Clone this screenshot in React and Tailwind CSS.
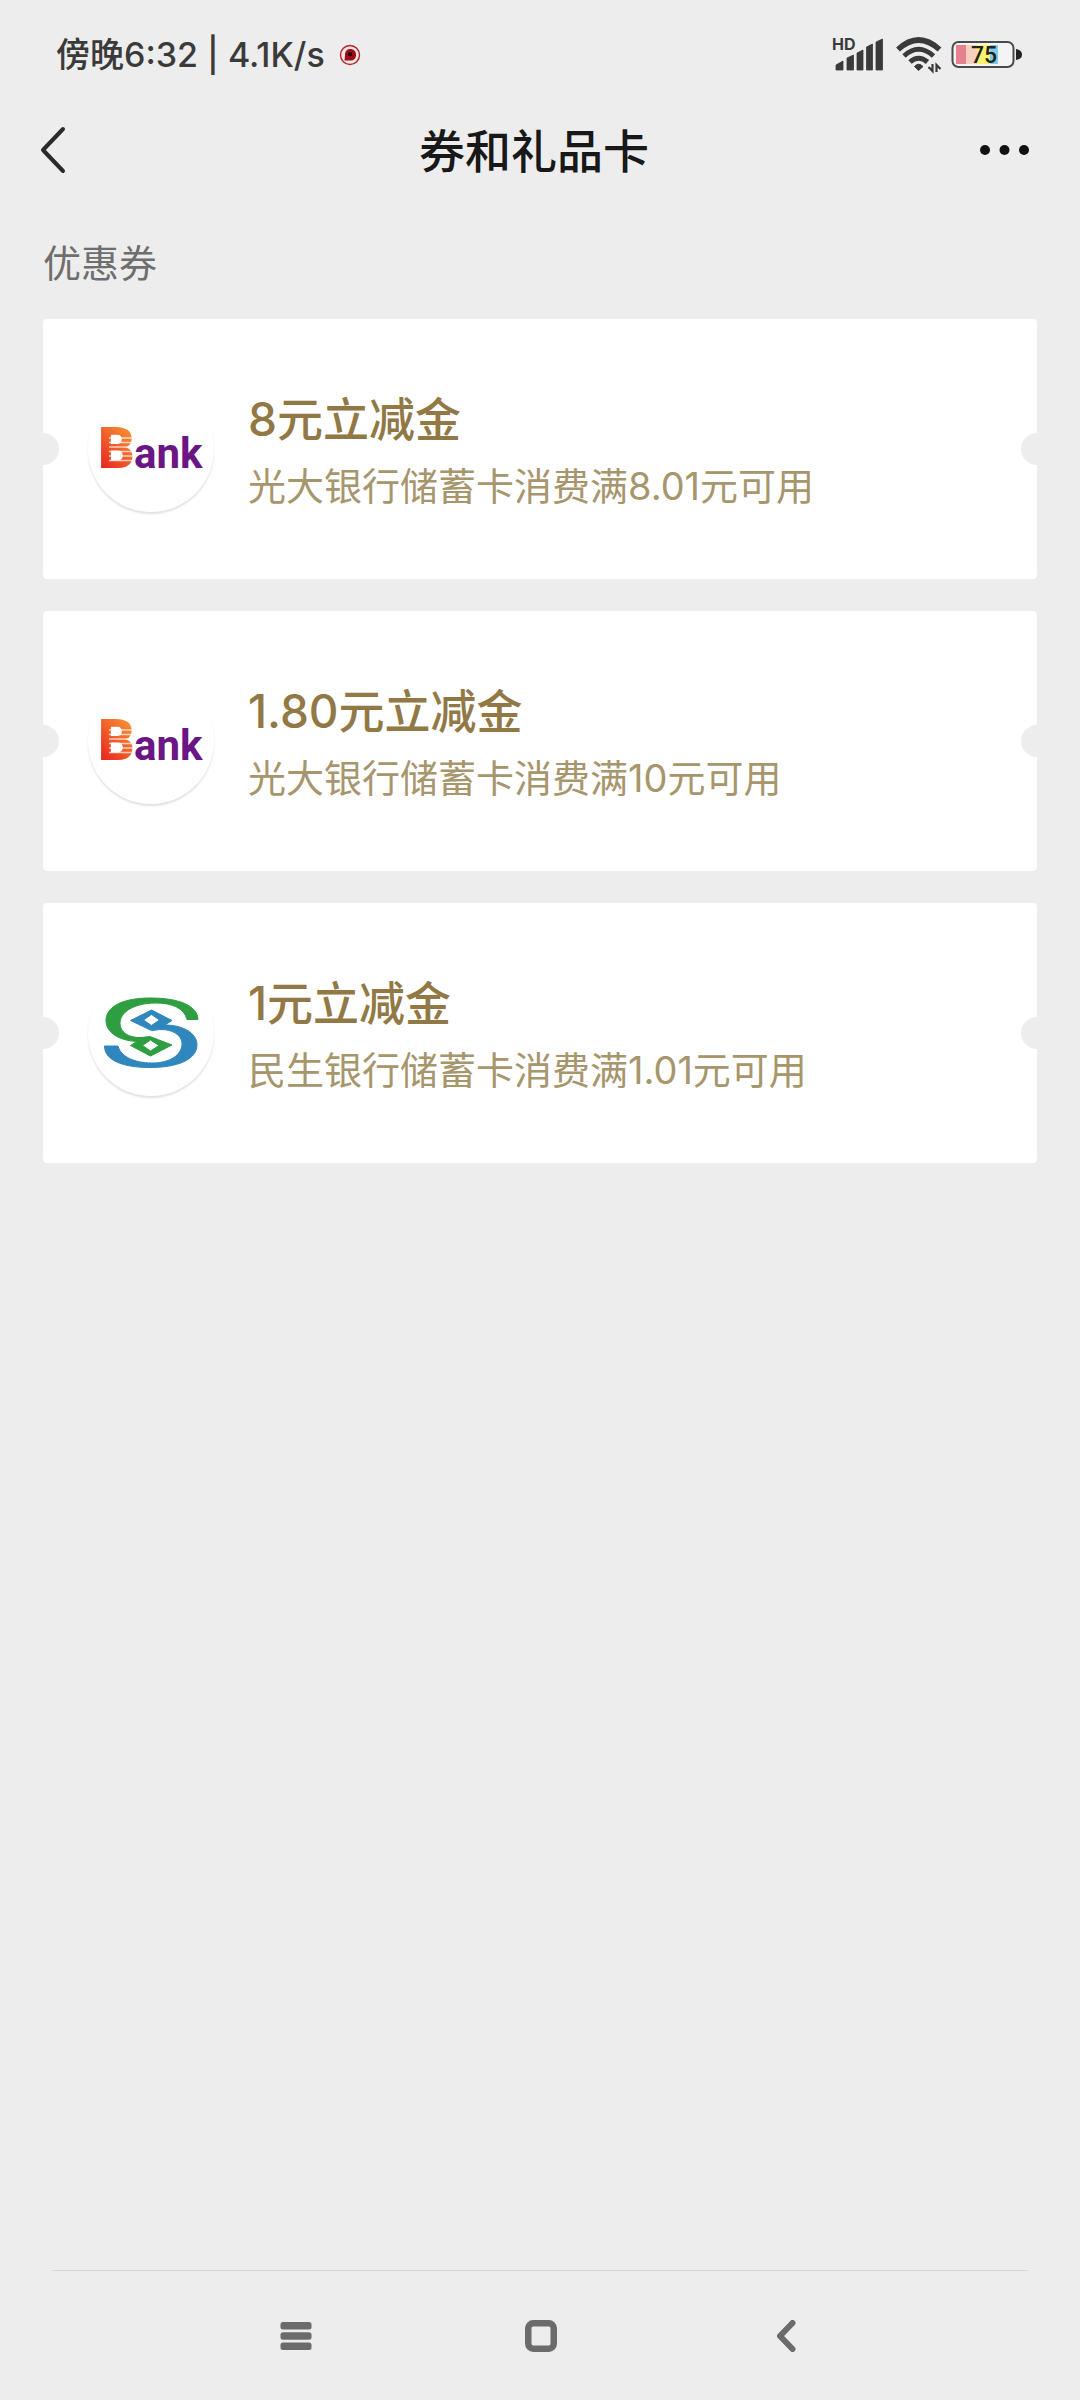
import React from 'react';

const coupons = [
  { id: 1, logo: 'everbright', title: '8元立减金', description: '光大银行储蓄卡消费满8.01元可用' },
  { id: 2, logo: 'everbright', title: '1.80元立减金', description: '光大银行储蓄卡消费满10元可用' },
  { id: 3, logo: 'minsheng', title: '1元立减金', description: '民生银行储蓄卡消费满1.01元可用' },
];

const EverbrightLogo = () => (
  <svg className="w-[126px] h-[126px]" viewBox="0 0 126 126" role="img" aria-label="Bank">
    <defs>
      <linearGradient id="bank-b" x1="0.8" y1="0" x2="0.2" y2="1">
        <stop offset="0" stopColor="#f9a13a" />
        <stop offset="0.45" stopColor="#f2642a" />
        <stop offset="1" stopColor="#e6141e" />
      </linearGradient>
    </defs>
    <text x="10" y="82" fontSize="57" fontWeight="900" fill="url(#bank-b)" className="font-[Roboto,sans-serif]">B</text>
    <path d="M21 52H46M21 56.500H46M21 61H46M21 65.500H46M21 70H46M21 74.500H46" stroke="#fff" strokeWidth="1.300" opacity="0.700" />
    <text x="46" y="82" fontSize="42" fontWeight="700" fill="#6a1685" className="font-[Roboto,sans-serif]">ank</text>
  </svg>
);

const MinshengLogo = () => (
  <svg className="w-[126px] h-[126px]" viewBox="88 986 126 126" fillRule="evenodd" strokeWidth="1" role="img" aria-label="民生银行">
    <path
      fill="#2f9e41"
      stroke="#2f9e41"
      d="M198 1035.500H187C184 1024 172 1019 156 1019C134 1019 120 1028 120 1039.500C120 1049 130 1054 141 1053.500L150 1052.500L172 1061L150.500 1072L130.500 1061.500L137 1057.500C118 1056.500 106 1048 106 1036.500C106 1022 124 1014 150 1014C180 1014 197.500 1022 198 1035.500ZM150.500 1056L142.500 1061.500L150.500 1067L159 1061.500Z"
    />
    <path
      fill="#2f87bd"
      stroke="#2f87bd"
      d="M104.500 1062H118C121 1073 135 1079 152 1079C170 1079 182 1071 182 1059.500C182 1051 172 1045 160 1045.500L151.500 1046.500L130.500 1036.500L151.500 1026L172 1036.500L165 1041C184 1041 197 1050 197 1060.500C197 1076 177 1083.500 150 1083.500C122 1083.500 104.500 1076 104.500 1062ZM151.500 1030.500L143.500 1036L151.500 1041.500L159.500 1036Z"
    />
  </svg>
);

const StatusBar = () => (
  <div className="flex h-[110px] items-center justify-between pl-14 pr-[57px] text-[#3a3a3a]">
    <div className="flex items-center gap-3.5">
      <span className="text-[34px] font-medium leading-10">傍晚6:32 | 4.1K/s</span>
      <svg className="size-[22px]" viewBox="0 0 22 22" aria-hidden="true">
        <circle cx="11" cy="11" r="9.500" fill="#f6e4e4" stroke="#b0252b" strokeWidth="1.400" />
        <path d="M11 5C15 5 17 7.500 17 11C17 14.500 15 16.500 11 16.500H5.500L6 11C6 7.500 8 5 11 5Z" fill="#9c0e14" />
        <path d="M9 8.500H13V12H9Z" fill="#2a0508" />
      </svg>
    </div>

    <div className="flex items-center">
      <svg className="w-[54px] h-[50px]" viewBox="830 31 54 50" fill="currentColor" role="img" aria-label="HD">
        <text x="832" y="51" fontSize="16" fontWeight="700">HD</text>
        <path d="M836 71V66L843 62V71ZM847 71V59L853.500 56V71ZM857 71V54L863 51V71ZM866.500 71V48L872.500 45V71ZM876 71V43L882.500 40V71Z" stroke="currentColor" strokeWidth="0.800" strokeLinejoin="round" />
      </svg>
      <svg className="ml-3 w-[46px] h-[38px]" viewBox="896 37 46 38" fill="none" stroke="currentColor" aria-hidden="true">
        <path d="M898 50.500Q918.500 31.500 939.500 50.500" strokeWidth="5.500" />
        <path d="M904 57Q918.500 43.500 933.500 57" strokeWidth="5" />
        <path d="M910 63Q918.500 55.500 927.500 63" strokeWidth="5" />
        <path d="M914.500 67.500Q918.500 63 923 67.500L918.500 71.500Z" fill="currentColor" strokeWidth="1" />
        <path d="M932.500 65V72L928.500 68M936.500 73V66L940.500 70" strokeWidth="2.200" />
      </svg>
      <svg className="ml-[9px] w-[72px] h-[42px]" viewBox="951 35 72 42" role="img" aria-label="75%">
        <rect x="952.500" y="43" width="61" height="25" rx="6" fill="#f4f4f4" stroke="#4a4a4a" strokeWidth="2" />
        <path fill="#e8818f" d="M956 46H966V65H956Z" />
        <path fill="#f8d0c0" d="M966 46H977V65H966Z" />
        <path fill="#fbf36c" d="M977 46H990V65H977Z" />
        <path fill="#7ecbee" d="M990 46H998V65H990Z" />
        <text x="971" y="64" fontSize="23" fontWeight="500" fill="#222" className="font-[Roboto,sans-serif]">75</text>
        <path d="M1016 50Q1022 51 1022 55.500Q1022 60 1016 61Z" fill="#222" />
      </svg>
    </div>
  </div>
);

const NavHeader = () => (
  <header className="flex h-[79px] items-center text-[#181818]">
    <button type="button" aria-label="返回" className="flex h-full w-[108px] items-center pl-10">
      <svg className="w-[26px] h-12" viewBox="0 0 26 48" fill="none" stroke="#2a2a2a" strokeWidth="4" strokeLinecap="round" strokeLinejoin="round">
        <path d="M23 3L3 24L23 45" />
      </svg>
    </button>
    <h1 className="flex-1 pt-0.5 text-center text-[46px] font-medium leading-[60px]">券和礼品卡</h1>
    <button type="button" aria-label="更多" className="flex h-full w-[120px] items-center justify-end pr-[51px]">
      <svg className="w-[49px] h-3" viewBox="0 0 49 12" fill="#111">
        <circle cx="5" cy="6" r="5" />
        <circle cx="24.500" cy="6" r="5" />
        <circle cx="44" cy="6" r="5" />
      </svg>
    </button>
  </header>
);

const CouponCard = ({ coupon }) => (
  <li className="relative flex h-[260px] items-center overflow-hidden rounded bg-white pl-[45px]">
    {/* Ticket notches */}
    <span className="absolute -left-4 top-1/2 size-8 -translate-y-1/2 rounded-full bg-[#ededed]" />
    <span className="absolute -right-4 top-1/2 size-8 -translate-y-1/2 rounded-full bg-[#ededed]" />

    <div className="shrink-0 rounded-full shadow-[0_2px_2px_rgba(0,0,0,0.12)]">
      {coupon.logo === 'everbright' ? <EverbrightLogo /> : <MinshengLogo />}
    </div>
    <div className="ml-[34px] pt-1.5">
      <h3 className="text-[46px] font-medium leading-[68px] text-[#917844]">{coupon.title}</h3>
      <p className="text-[38px] leading-[66px] text-[#a7956c]">{coupon.description}</p>
    </div>
  </li>
);

const BottomNav = () => (
  <nav>
    <div className="mx-[52px] h-px bg-[#d6d6d6]" />
    <div className="grid h-[129px] grid-cols-3 items-center pl-[174px] pr-[172px] text-[#6b6b6b]">
      <button type="button" aria-label="最近任务" className="flex h-20 items-center justify-center">
        <svg className="size-8" viewBox="0 0 32 32" fill="currentColor">
          <rect x="0.500" y="2" width="31" height="7.500" rx="2.500" />
          <rect x="0.500" y="12.200" width="31" height="7.500" rx="2.500" />
          <rect x="0.500" y="22.500" width="31" height="7.500" rx="2.500" />
        </svg>
      </button>
      <button type="button" aria-label="主屏幕" className="flex h-20 items-center justify-center">
        <svg className="size-8" viewBox="0 0 32 32" fill="none" stroke="currentColor" strokeWidth="6.500">
          <rect x="3.250" y="3.250" width="25.500" height="25.500" rx="5" />
        </svg>
      </button>
      <button type="button" aria-label="返回" className="flex h-20 items-center justify-center">
        <svg className="size-8" viewBox="0 0 32 32" fill="none" stroke="currentColor" strokeWidth="6" strokeLinecap="round" strokeLinejoin="round">
          <path d="M22.500 3L10 16L22.500 29" />
        </svg>
      </button>
    </div>
  </nav>
);

const App = () => {
  return (
    <div className="flex min-h-screen flex-col bg-[#ededed] font-[Inter,'Noto_Sans_CJK_SC',sans-serif]">
      <StatusBar />
      <NavHeader />

      <main className="flex-1 px-[43px] pt-[50px]">
        <h2 className="mb-8 text-[38px] leading-[48px] text-[#6e6e6e]">优惠券</h2>
        <ul className="flex flex-col gap-8">
          {coupons.map((coupon) => (
            <CouponCard key={coupon.id} coupon={coupon} />
          ))}
        </ul>
      </main>

      <BottomNav />
    </div>
  );
};

export default App;
